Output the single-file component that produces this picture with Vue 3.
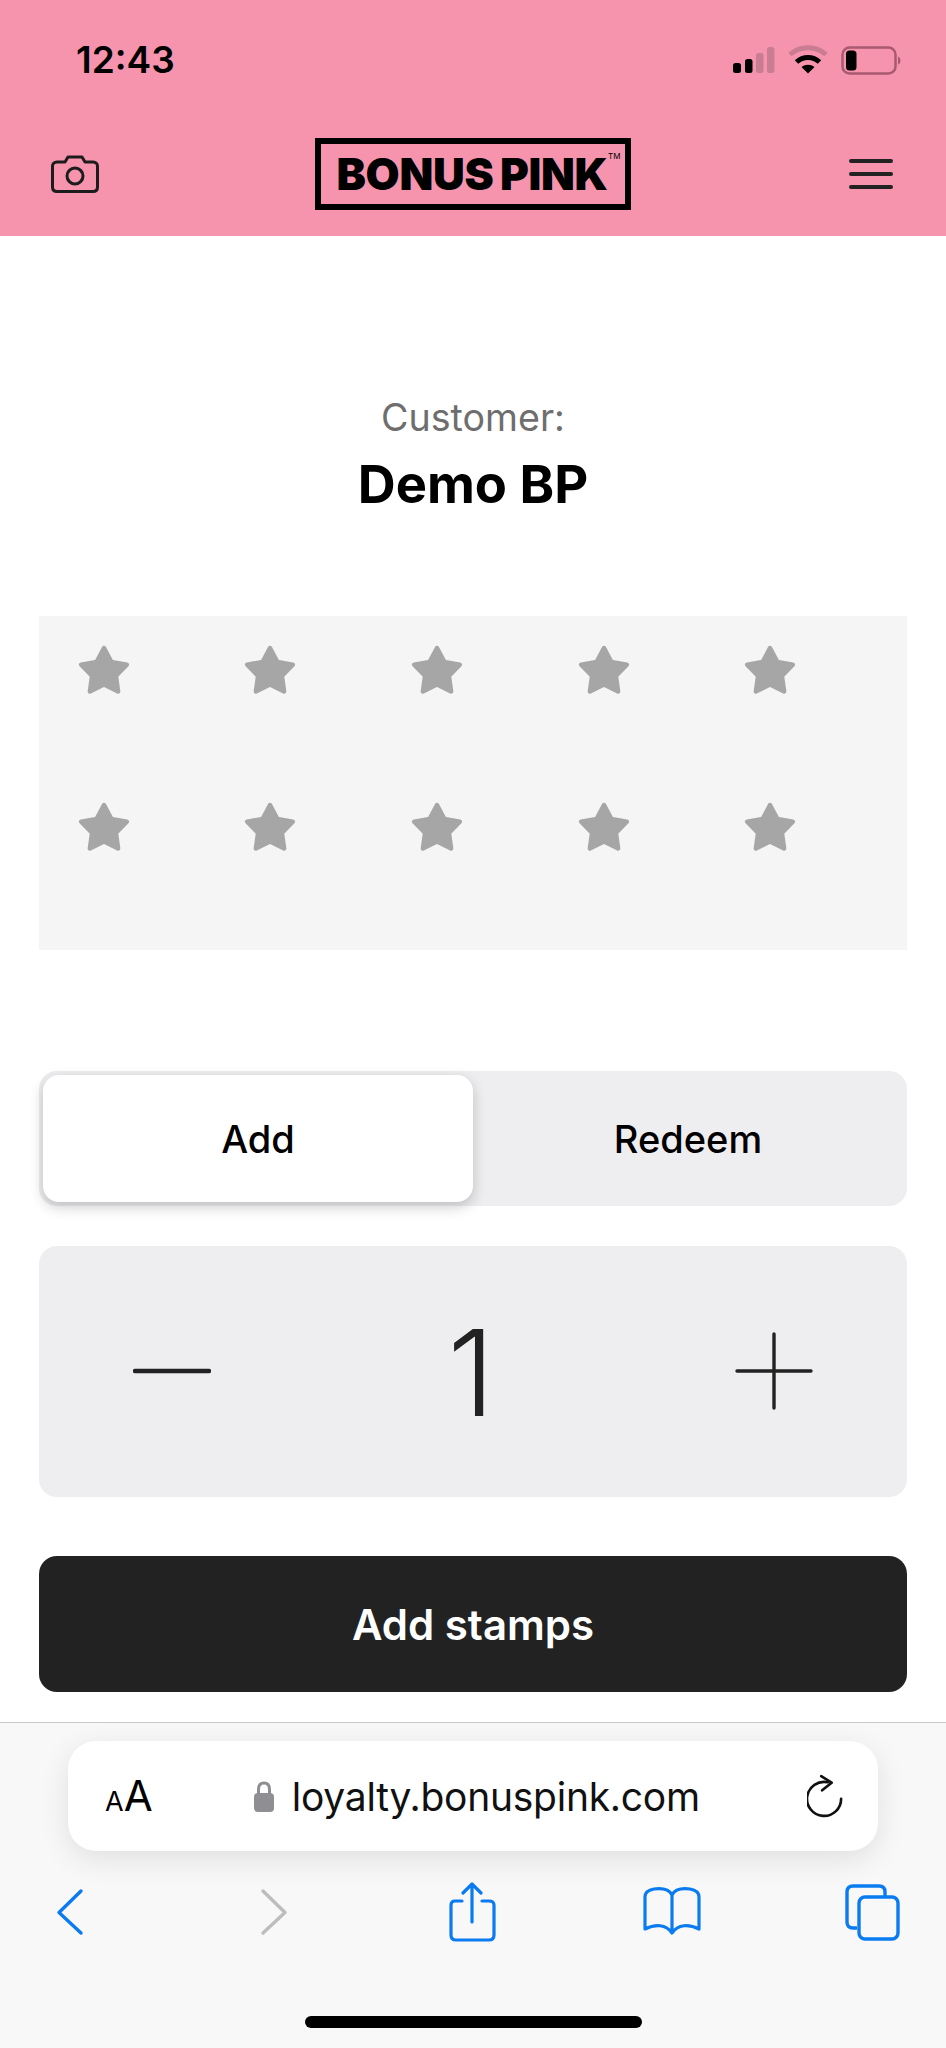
<template>
  <div class="page">
    <header class="top">
      <div class="status">
        <span class="time">12:43</span>
        <svg class="status-icons" width="175" height="32" viewBox="0 0 175 32">
          <!-- signal -->
          <rect x="3" y="19" width="8" height="10" rx="2.5" fill="#000" />
          <rect x="15" y="15" width="7.5" height="14" rx="2.5" fill="#000" />
          <rect x="26" y="9" width="7.5" height="20" rx="2.5" fill="#c97c92" />
          <rect x="37" y="3" width="7.5" height="26" rx="2.5" fill="#c97c92" />
          <!-- wifi -->
          <path d="M60 10.5 C70 1.5 86 1.5 96 10.5" fill="none" stroke="#c97c92" stroke-width="5" />
          <path d="M66.5 18 C73 12 83 12 89.5 18" fill="none" stroke="#000" stroke-width="5" />
          <path d="M71.5 23 L78 29.5 L84.5 23 C80.5 20 75.5 20 71.5 23 Z" fill="#000" />
          <!-- battery -->
          <rect x="112.5" y="3.5" width="53" height="26" rx="7" fill="none" stroke="#a85a70" stroke-width="2.5" />
          <rect x="116" y="6.5" width="10.5" height="20" rx="3.5" fill="#000" />
          <path d="M168 12.5 C171 13.5 171.5 19.5 168 20.5 Z" fill="#a85a70" />
        </svg>
      </div>
      <nav class="nav">
        <svg class="camera" width="48" height="38" viewBox="0 0 48 38" fill="none" stroke="#1c1c1c" stroke-width="3">
          <path d="M6 7 H14 L17 2 H31 L34 7 H42 C45 7 46.5 9 46.5 11 V32 C46.5 35 45 36.5 42 36.5 H6 C3 36.5 1.5 35 1.5 32 V11 C1.5 9 3 7 6 7 Z" stroke-linejoin="round" />
          <circle cx="24" cy="21" r="8" />
        </svg>
        <div class="logo">
          <span class="wordmark">BONUS PINK</span>
          <span class="tm">TM</span>
        </div>
        <div class="burger">
          <i></i><i></i><i></i>
        </div>
      </nav>
    </header>

    <main class="content">
      <p class="label">Customer:</p>
      <h1 class="name">Demo BP</h1>

      <section class="card">
        <svg v-for="n in 10" :key="n" class="star" width="52" height="50" viewBox="0 0 52 50">
          <path :d="starPath" fill="#a6a6a6" stroke="#a6a6a6" stroke-width="4.5" stroke-linejoin="round" />
        </svg>
      </section>

      <div class="segment">
        <button class="seg-item active">Add</button>
        <button class="seg-item">Redeem</button>
      </div>

      <div class="stepper">
        <svg class="step-icon" width="78" height="78" viewBox="0 0 78 78">
          <line x1="2" y1="39" x2="76" y2="39" stroke="#222" stroke-width="4.5" stroke-linecap="round" />
        </svg>
        <span class="count">1</span>
        <svg class="step-icon" width="78" height="78" viewBox="0 0 78 78">
          <path d="M2 39 H76 M39 2 V76" stroke="#222" stroke-width="3.4" stroke-linecap="round" fill="none" />
        </svg>
      </div>

      <button class="submit">Add stamps</button>
    </main>

    <footer class="browser">
      <div class="urlbar">
        <span class="aa"><small>A</small>A</span>
        <span class="address">
          <svg width="20" height="31" viewBox="0 0 20 31">
            <path d="M4.5 14 V8.5 C4.5 4.5 6.5 2 10 2 C13.5 2 15.5 4.5 15.5 8.5 V14" fill="none" stroke="#8e8e93" stroke-width="3" />
            <rect x="0" y="12" width="20" height="19" rx="4" fill="#8e8e93" />
          </svg>
          loyalty.bonuspink.com
        </span>
        <svg width="36" height="44" viewBox="0 0 38 44" fill="none" stroke="#111" stroke-width="2.8" stroke-linecap="round" stroke-linejoin="round">
          <path d="M22 7.5 A18 18 0 1 0 36 25" />
          <path d="M15 1 L26 8 L16 16" />
        </svg>
      </div>

      <div class="tools">
        <svg width="60" height="60" viewBox="0 0 60 60" fill="none" stroke="#0a7bf0" stroke-width="3.4" stroke-linecap="round" stroke-linejoin="round">
          <path d="M41 9 L19 30.5 L41 51" />
        </svg>
        <svg width="60" height="60" viewBox="0 0 60 60" fill="none" stroke="#bdbdc0" stroke-width="3.4" stroke-linecap="round" stroke-linejoin="round">
          <path d="M22 9 L44 30.5 L22 51" />
        </svg>
        <svg width="60" height="60" viewBox="0 0 60 60" fill="none" stroke="#0a7bf0" stroke-width="3.2" stroke-linecap="round" stroke-linejoin="round">
          <path d="M20 19 H13 C10 19 9 21 9 23 V53 C9 56 10.5 58 14 58 H47 C50.5 58 52 56 52 53 V23 C52 21 51 19 47 19 H40" />
          <path d="M30 40 V2 M21 11 L30 2 L39 11" />
        </svg>
        <svg width="60" height="60" viewBox="0 0 60 60" fill="none" stroke="#0a7bf0" stroke-width="3.2" stroke-linecap="round" stroke-linejoin="round">
          <path d="M30 13 C27 7 20 6 12 7 C6 8 3 10 3 15 V47 C13 42 24 42 30 51 C36 42 47 42 57 47 V15 C57 10 54 8 48 7 C40 6 33 7 30 13 Z M30 13 V49" />
        </svg>
        <svg width="60" height="60" viewBox="0 0 60 60" fill="none" stroke="#0a7bf0" stroke-width="3.4" stroke-linejoin="round">
          <path d="M14 46 H10 C6 46 4 44 4 40 V10 C4 6 6 4 10 4 H36 C40 4 42 6 42 10 V15" />
          <rect x="16" y="15" width="39" height="42" rx="6" />
        </svg>
      </div>

      <div class="home-bar"></div>
    </footer>
  </div>
</template>

<script setup>
// five pointed star, slightly inset so the rounded stroke stays inside the viewBox
const starPoints = () => {
  const cx = 26
  const cy = 27
  const pts = []
  for (let i = 0; i < 10; i++) {
    const r = i % 2 === 0 ? 24 : 12.5
    const a = (Math.PI / 5) * i - Math.PI / 2
    pts.push(`${(cx + r * Math.cos(a)).toFixed(1)} ${(cy + r * Math.sin(a)).toFixed(1)}`)
  }
  return pts
}
const starPath = 'M' + starPoints().join(' L') + ' Z'
</script>

<style>
html,
body {
  margin: 0;
  background: #fff;
}
</style>

<style scoped>
.page {
  width: 946px;
  height: 2048px;
  display: flex;
  flex-direction: column;
  overflow: hidden;
  font-family: Inter, "Liberation Sans", sans-serif;
  color: #000;
  background: #fff;
}

.top {
  height: 236px;
  box-sizing: border-box;
  background: #f694ad;
  padding-top: 44px;
}

.status {
  display: flex;
  align-items: center;
  justify-content: space-between;
  height: 32px;
  padding: 0 41px 0 76px;
}

.time {
  font-size: 37px;
  font-weight: 600;
  line-height: 32px;
}

.nav {
  display: flex;
  align-items: center;
  justify-content: space-between;
  margin-top: 62px;
  padding: 0 53px 0 51px;
}

.logo {
  position: relative;
  box-sizing: border-box;
  width: 316px;
  height: 72px;
  margin-left: -3px;
  border: 6px solid #000;
  display: flex;
  align-items: center;
  padding-left: 16px;
}

.wordmark {
  font-size: 44px;
  font-weight: 900;
  line-height: 1;
  letter-spacing: -0.3px;
  word-spacing: -2px;
  white-space: nowrap;
}

.tm {
  position: absolute;
  top: 8px;
  right: 4px;
  font-size: 8px;
  line-height: 1;
}

.burger {
  width: 44px;
  display: flex;
  flex-direction: column;
  gap: 9px;
}

.burger i {
  display: block;
  height: 4px;
  border-radius: 2px;
  background: #222;
}

.content {
  padding: 0 39px;
  display: flex;
  flex-direction: column;
  align-items: stretch;
}

.label {
  margin: 160px 0 0;
  text-align: center;
  font-size: 37.6px;
  line-height: 44px;
  color: #6e6e6e;
}

.name {
  margin: 16px 0 0;
  text-align: center;
  font-size: 52.5px;
  font-weight: 700;
  line-height: 56px;
}

.card {
  margin-top: 104px;
  height: 334px;
  box-sizing: border-box;
  background: #f5f5f6;
  padding: 29px 0 0 38.5px;
  display: flex;
  flex-wrap: wrap;
  align-content: flex-start;
  column-gap: 114.7px;
  row-gap: 107px;
}

.segment {
  margin-top: 121px;
  height: 135px;
  box-sizing: border-box;
  padding: 4px 0 4px 4px;
  background: #eeeef1;
  border-radius: 18px;
  display: flex;
}

.seg-item {
  flex: 1;
  border: 0;
  background: none;
  padding: 0 4px 0 0;
  font: 450 38px Inter, sans-serif;
  color: #000;
}

.seg-item.active {
  flex: 0 0 430px;
  padding: 0;
  background: #fff;
  border-radius: 16px;
  box-shadow: 0 5px 14px rgba(0, 0, 0, 0.2);
}

.stepper {
  margin-top: 40px;
  height: 251px;
  padding: 0 94px;
  background: #eeeef1;
  border-radius: 18px;
  display: flex;
  align-items: center;
  justify-content: space-between;
}

.step-icon {
  margin-top: -2px;
}

.count {
  font-size: 120px;
  font-weight: 350;
  line-height: 1;
  color: #222;
  margin: 2px 0 0 -4px;
}

.submit {
  margin-top: 59px;
  height: 136px;
  border: 0;
  border-radius: 18px;
  background: #222;
  color: #fff;
  font: 600 42px Inter, sans-serif;
}

.browser {
  flex: 1;
  margin-top: 30px;
  border-top: 1px solid #c9c9c9;
  background: #f8f8f8;
  display: flex;
  flex-direction: column;
}

.urlbar {
  margin: 18px 68px 0;
  height: 110px;
  padding: 0 35px 0 37px;
  border-radius: 28px;
  background: #fff;
  box-shadow: 0 8px 30px rgba(0, 0, 0, 0.1);
  display: flex;
  align-items: center;
  justify-content: space-between;
}

.aa {
  font-size: 42px;
  line-height: 1;
}

.aa small {
  font-size: 27px;
}

.address {
  display: flex;
  align-items: center;
  gap: 18px;
  margin-right: 6px;
  font-size: 39px;
  letter-spacing: -0.25px;
  line-height: 1;
  color: #111;
}

.tools {
  margin-top: 31px;
  padding: 0 43px 0 40px;
  display: flex;
  justify-content: space-between;
}

.home-bar {
  margin: auto auto 20px;
  width: 337px;
  height: 12px;
  border-radius: 6px;
  background: #000;
}
</style>
